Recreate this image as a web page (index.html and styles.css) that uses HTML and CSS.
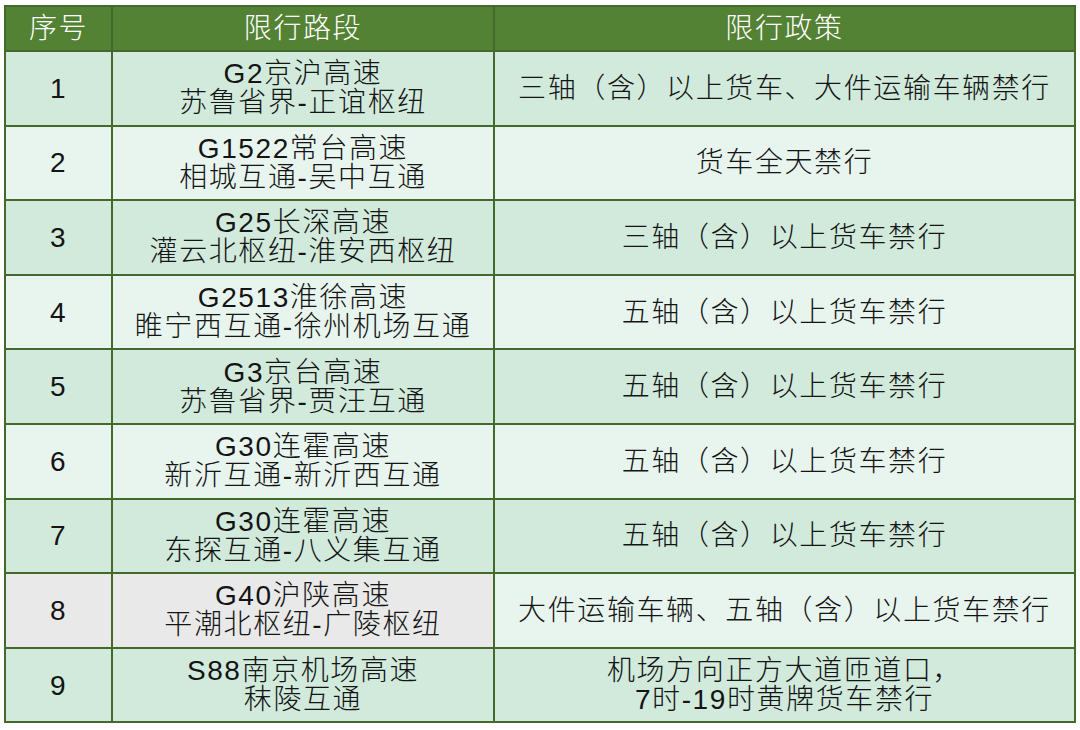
FILE: index.html
```html
<!DOCTYPE html>
<html lang="zh">
<head>
<meta charset="utf-8">
<link rel="stylesheet" href="styles.css">
</head>
<body>
<table class="tbl">
  <colgroup><col class="c1"><col class="c2"><col class="c3"></colgroup>
  <thead>
    <tr><th>序号</th><th>限行路段</th><th>限行政策</th></tr>
  </thead>
  <tbody>
    <tr class="odd"><td>1</td><td>G2京沪高速<br>苏鲁省界-正谊枢纽</td><td>三轴（含）以上货车、大件运输车辆禁行</td></tr>
    <tr class="even"><td>2</td><td>G1522常台高速<br>相城互通-吴中互通</td><td>货车全天禁行</td></tr>
    <tr class="odd"><td>3</td><td>G25长深高速<br>灌云北枢纽-淮安西枢纽</td><td>三轴（含）以上货车禁行</td></tr>
    <tr class="even"><td>4</td><td>G2513淮徐高速<br>睢宁西互通-徐州机场互通</td><td>五轴（含）以上货车禁行</td></tr>
    <tr class="odd"><td>5</td><td>G3京台高速<br>苏鲁省界-贾汪互通</td><td>五轴（含）以上货车禁行</td></tr>
    <tr class="even"><td>6</td><td>G30连霍高速<br>新沂互通-新沂西互通</td><td>五轴（含）以上货车禁行</td></tr>
    <tr class="odd"><td>7</td><td>G30连霍高速<br>东探互通-八义集互通</td><td>五轴（含）以上货车禁行</td></tr>
    <tr class="even"><td class="grey">8</td><td class="grey">G40沪陕高速<br>平潮北枢纽-广陵枢纽</td><td>大件运输车辆、五轴（含）以上货车禁行</td></tr>
    <tr class="odd"><td>9</td><td>S88南京机场高速<br>秣陵互通</td><td>机场方向正方大道匝道口，<br>7时-19时黄牌货车禁行</td></tr>
  </tbody>
</table>
</body>
</html>
```
FILE: styles.css
```css
html, body {
  margin: 0;
  padding: 0;
  background: #ffffff;
}
body {
  padding: 5px 4px;
  font-family: "Liberation Sans", "Noto Sans CJK SC", sans-serif;
  color: #141414;
}
.tbl {
  border-collapse: collapse;
  width: 1070px;
  table-layout: fixed;
}
.c1 { width: 107px; }
.c2 { width: 382px; }
.c3 { width: 581px; }
.tbl th, .tbl td {
  border: 2px solid #43692c;
  text-align: center;
  vertical-align: middle;
  font-size: 28px;
  font-weight: 300;
  letter-spacing: 1.6px;
  line-height: 29px;
  padding: 0;
}
.tbl th {
  background: #548235;
  color: #ffffff;
  height: 43px;
}
.tbl td {
  height: 72.6px;
}
.odd td { background: #d1eadc; }
.even td { background: #e8f4ee; }
.even td.grey { background: #e8e9e8; }
```
